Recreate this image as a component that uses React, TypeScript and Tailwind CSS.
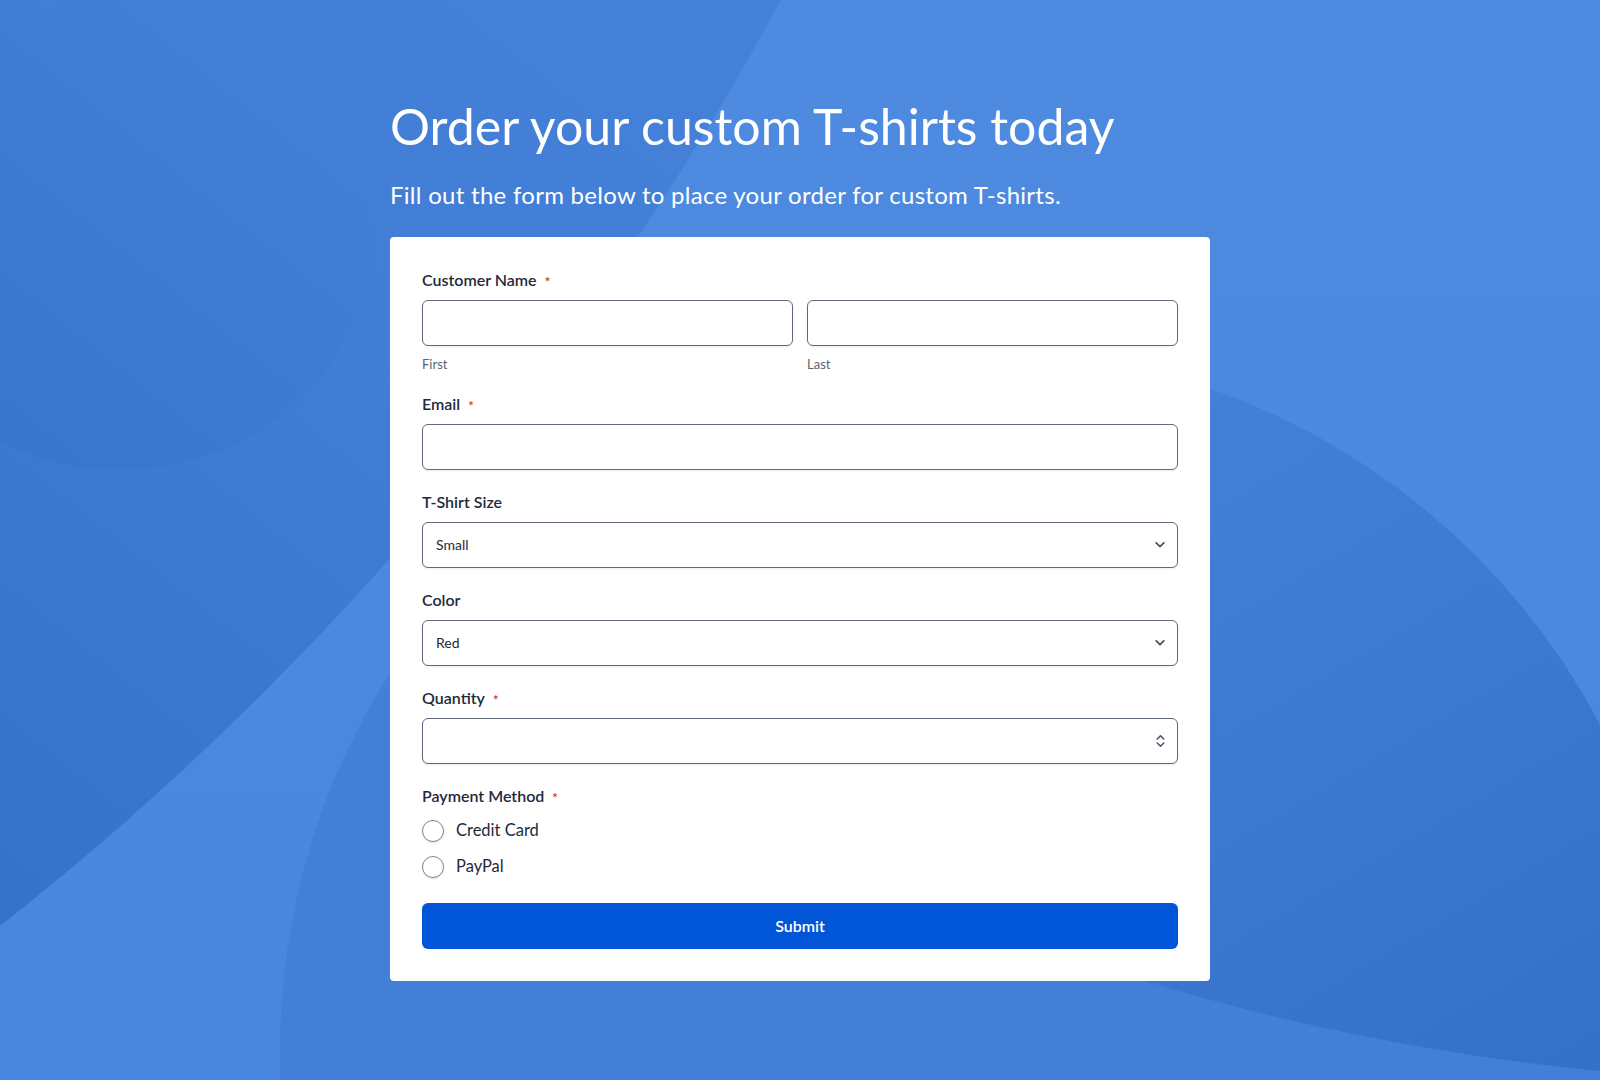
import React, { useState } from 'react';

const labelCls = 'flex h-6 items-center text-[16px] font-semibold text-[#1f2a3c]';
const fieldCls =
  'block h-[46px] w-full rounded-md border border-[#5f6b7b] bg-white px-[13px] text-[14px] text-[#1f2937] shadow-[0_1px_2px_rgba(15,23,42,0.08)] outline-none';

const Required: React.FC = () => <span className="relative top-[3px] ml-[8px] text-[13px] text-[#d92d20]">*</span>;

const Chevron: React.FC = () => (
  <svg className="pointer-events-none absolute right-[13px] top-1/2 -translate-y-1/2" width="10" height="7" viewBox="0 0 10 7" fill="none">
    <path d="M1.2 1.3 5 5.1l3.8-3.8" stroke="#4b5563" strokeWidth="1.8" strokeLinecap="round" strokeLinejoin="round" />
  </svg>
);

const Spinner: React.FC = () => (
  <svg className="pointer-events-none absolute right-[13px] top-1/2 -translate-y-1/2" width="9" height="14" viewBox="0 0 9 14" fill="none">
    <path d="M1.3 5 4.5 1.8 7.7 5M1.3 9l3.2 3.2L7.7 9" stroke="#4b5563" strokeWidth="1.6" strokeLinecap="round" strokeLinejoin="round" />
  </svg>
);

// decorative background circles
const Backdrop: React.FC = () => (
  <svg className="absolute inset-0 h-full w-full" viewBox="0 0 1600 1080" preserveAspectRatio="none">
    <defs>
      <linearGradient id="gBase" x1="0" y1="0" x2="0" y2="1080" gradientUnits="userSpaceOnUse">
        <stop offset="0" stopColor="#4d8ae0" />
        <stop offset="1" stopColor="#4986dd" />
      </linearGradient>
      <linearGradient id="gA" x1="760" y1="0" x2="0" y2="950" gradientUnits="userSpaceOnUse">
        <stop offset="0" stopColor="#4581d9" />
        <stop offset="0.45" stopColor="#417dd5" />
        <stop offset="1" stopColor="#3671c9" />
      </linearGradient>
      <linearGradient id="gB" x1="380" y1="0" x2="0" y2="470" gradientUnits="userSpaceOnUse">
        <stop offset="0" stopColor="#4581d9" />
        <stop offset="1" stopColor="#3a75cd" />
      </linearGradient>
      <linearGradient id="gD" x1="1200" y1="380" x2="1600" y2="1060" gradientUnits="userSpaceOnUse">
        <stop offset="0" stopColor="#4381d8" />
        <stop offset="1" stopColor="#3470c7" />
      </linearGradient>
      <clipPath id="clipC">
        <circle cx="980" cy="1050" r="700" />
      </clipPath>
    </defs>
    <rect width="1600" height="1080" fill="url(#gBase)" />
    <circle cx="-1847" cy="-1424" r="2989" fill="url(#gA)" />
    <ellipse cx="120" cy="235" rx="252" ry="235" fill="url(#gB)" />
    <circle cx="980" cy="1050" r="700" fill="#437fd6" />
    <circle cx="1815" cy="-1218" r="2299" fill="url(#gD)" clipPath="url(#clipC)" />
  </svg>
);

export default function App() {
  const [first, setFirst] = useState('');
  const [last, setLast] = useState('');
  const [email, setEmail] = useState('');
  const [size, setSize] = useState('Small');
  const [color, setColor] = useState('Red');
  const [quantity, setQuantity] = useState('');
  const [payment, setPayment] = useState('');

  return (
    <div className="relative min-h-[1080px] overflow-hidden font-['Lato',sans-serif]">
      <Backdrop />

      <main className="relative mx-auto w-[820px] pt-[96px] pb-20">
        <h1 className="text-[50px] font-normal leading-[1.2] text-white">Order your custom T-shirts today</h1>
        <p className="mt-[25px] text-[24px] leading-[1.2] tracking-[0.28px] text-white">
          Fill out the form below to place your order for custom T-shirts.
        </p>

        <form className="mt-[27px] rounded-[4px] bg-white px-8 pt-[31px] pb-8" onSubmit={(e) => e.preventDefault()}>
          {/* Customer name */}
          <div>
            <label className={labelCls}>
              Customer Name
              <Required />
            </label>
            <div className="mt-2 grid grid-cols-2 gap-[14px]">
              <div>
                <input className={fieldCls} value={first} onChange={(e) => setFirst(e.target.value)} />
                <div className="mt-2 h-5 text-[13px] leading-5 text-[#5b6472]">First</div>
              </div>
              <div>
                <input className={fieldCls} value={last} onChange={(e) => setLast(e.target.value)} />
                <div className="mt-2 h-5 text-[13px] leading-5 text-[#5b6472]">Last</div>
              </div>
            </div>
          </div>

          {/* Email */}
          <div className="mt-[18px]">
            <label className={labelCls}>
              Email
              <Required />
            </label>
            <input type="email" className={`${fieldCls} mt-2`} value={email} onChange={(e) => setEmail(e.target.value)} />
          </div>

          {/* Size */}
          <div className="mt-5">
            <label className={labelCls}>T-Shirt Size</label>
            <div className="relative mt-2">
              <select className={`${fieldCls} appearance-none`} value={size} onChange={(e) => setSize(e.target.value)}>
                <option>Small</option>
                <option>Medium</option>
                <option>Large</option>
                <option>X-Large</option>
              </select>
              <Chevron />
            </div>
          </div>

          {/* Color */}
          <div className="mt-5">
            <label className={labelCls}>Color</label>
            <div className="relative mt-2">
              <select className={`${fieldCls} appearance-none`} value={color} onChange={(e) => setColor(e.target.value)}>
                <option>Red</option>
                <option>Blue</option>
                <option>Green</option>
                <option>Black</option>
                <option>White</option>
              </select>
              <Chevron />
            </div>
          </div>

          {/* Quantity */}
          <div className="mt-5">
            <label className={labelCls}>
              Quantity
              <Required />
            </label>
            <div className="relative mt-2">
              <input
                inputMode="numeric"
                className={fieldCls}
                value={quantity}
                onChange={(e) => setQuantity(e.target.value.replace(/\D/g, ''))}
              />
              <Spinner />
            </div>
          </div>

          {/* Payment */}
          <div className="mt-5">
            <div className={labelCls}>
              Payment Method
              <Required />
            </div>
            <div className="mt-[5px]">
              {['Credit Card', 'PayPal'].map((opt) => (
                <label key={opt} className="flex h-9 cursor-pointer items-center gap-3">
                  <span
                    onClick={() => setPayment(opt)}
                    className="flex h-[22px] w-[22px] shrink-0 items-center justify-center rounded-full border border-[#7d8796] bg-white shadow-[0_1px_2px_rgba(15,23,42,0.12)]"
                  >
                    {payment === opt && <span className="h-[10px] w-[10px] rounded-full bg-[#0056d6]" />}
                  </span>
                  <span className="text-[16.5px] text-[#1f2a3c]">{opt}</span>
                </label>
              ))}
            </div>
          </div>

          <button
            type="submit"
            className="mt-[18px] flex h-[46px] w-full items-center justify-center rounded-md bg-[#0056d6] text-[16px] font-semibold text-white"
          >
            Submit
          </button>
        </form>
      </main>
    </div>
  );
}
